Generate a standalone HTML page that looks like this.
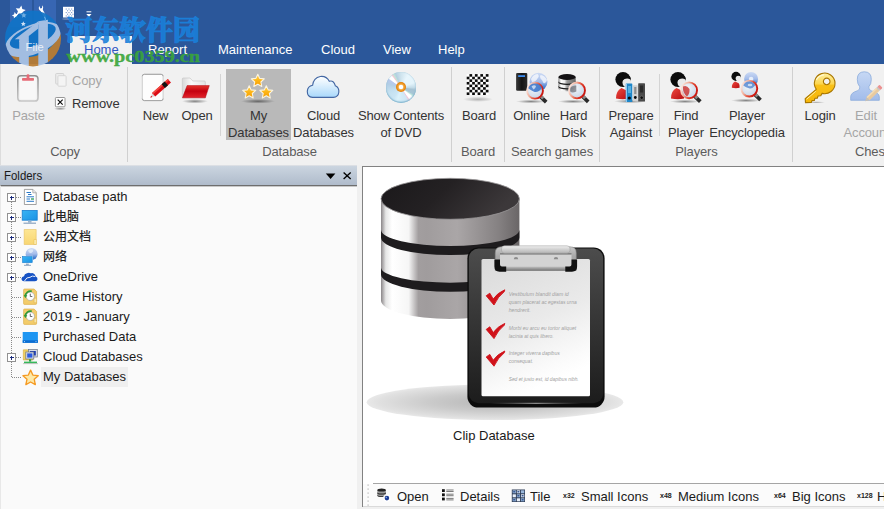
<!DOCTYPE html>
<html><head><meta charset="utf-8">
<style>
*{margin:0;padding:0;box-sizing:border-box}
html,body{width:884px;height:509px;overflow:hidden;background:#f0f0f0}
body{font-family:"Liberation Sans","Noto Sans CJK SC",sans-serif;font-size:13px;color:#1e1e1e;position:relative}
.abs{position:absolute}
svg{position:absolute;overflow:visible}
#title{left:0;top:0;width:884px;height:64px;background:#2b579a}
.qa{position:absolute;top:0;height:27px;width:22px;background:#3766b3}
.tab{position:absolute;top:42px;height:16px;line-height:16px;color:#fff;font-size:13px;white-space:nowrap}
#hometab{left:70px;top:36px;width:62px;height:28px;background:#f1f1f1}
#ribbon{left:0;top:64px;width:884px;height:101px;background:#f1f1f1;border-left:1px solid #dcdcdc}
.sep{position:absolute;width:1px;background:#d0d0d0;top:67px;height:95px}
.sep.s{top:74px;height:62px;background:#d4d4d4}
.lbl{position:absolute;font-size:13px;line-height:17px;text-align:center;white-space:nowrap;color:#343434;transform:translateX(-50%);top:107px;letter-spacing:-0.15px}
.lbl.dis{color:#a6a6a6}
.sl{position:absolute;font-size:13px;line-height:16px;white-space:nowrap;color:#343434;letter-spacing:-0.15px}
.glbl{position:absolute;font-size:13px;line-height:16px;text-align:center;white-space:nowrap;color:#5c5c5c;transform:translateX(-50%);top:144px;letter-spacing:-0.15px}
#hl{left:226px;top:69px;width:65px;height:71px;background:#b9b9b9}
#fhead{left:0;top:165px;width:357px;height:21px;background:linear-gradient(#cbd5e0,#aebaca);border-top:1px solid #dcdfe4}
#fhead span{position:absolute;left:4px;top:2px;line-height:16px;font-size:13px;transform:scaleX(0.88);transform-origin:0 0;color:#1a1a1a}
#tree{left:0;top:185px;width:357px;height:324px;background:#fafafa;border-top:1px solid #6e6e6e;box-shadow:inset 0 1px 0 #c8c8c8;border-left:1px solid #e8e8e8}
.ti{position:absolute;left:43px;font-size:13px;line-height:18px;white-space:nowrap;color:#1a1a1a}
#sel{left:41px;top:367px;width:87px;height:20px;background:#efefef}
#panel{left:362px;top:166px;width:530px;height:341px;background:#fff;border:1px solid #828282}
#tbar{left:363px;top:484px;width:521px;height:23px;background:#fbfbfb}
#tbline{left:373px;top:483px;width:511px;height:1px;background:#a5a5a5}
#tbbot{left:363px;top:506px;width:521px;height:1px;background:#dadada}
.tb{position:absolute;top:489px;font-size:13px;line-height:16px;white-space:nowrap;color:#1a1a1a}
.tx{position:absolute;top:491px;font-size:7px;line-height:9px;font-weight:bold;white-space:nowrap;color:#222}
#clip{position:absolute;left:453px;top:428px;font-size:13px;line-height:16px;white-space:nowrap;color:#1a1a1a}
#dvd{position:absolute;left:385.7px;top:72.3px;width:30.3px;height:30.3px;border-radius:50%;background:conic-gradient(from 0deg at 50% 50%,#cfe4ee 0deg,#e8f6fc 30deg,#e4f4fb 70deg,#c4dce8 90deg,#a6c2d2 100deg,#a8c6d6 118deg,#bfe6dc 124deg,#ffffff 130deg,#ffffff 142deg,#f0c8dc 147deg,#cfe6f4 153deg,#d4ecf8 180deg,#dcf2fb 195deg,#cbe6f4 215deg,#c4e0f0 250deg,#b2cee6 285deg,#b8c8ec 303deg,#ffffff 308deg,#ffffff 320deg,#f4c8d4 325deg,#bfe6d8 331deg,#b4d0e0 338deg,#cfe4ee 360deg);box-shadow:inset 0 -1.2px 1.5px #7eb2cc,inset 0 0 1px #9cc4d8}
#dvd i{position:absolute;left:10px;top:9.5px;width:10.3px;height:10.3px;border-radius:50%;background:radial-gradient(circle,#fff 0,#fff 1.9px,#f6b04a 2.6px,#e88a10 4.2px,#e07c08 5.1px)}
</style></head><body>
<div id="title" class="abs"></div>
<div class="qa" style="left:10px"></div><div class="qa" style="left:34px"></div>
<div id="hometab" class="abs"></div>
<div class="tab" style="left:84px;color:#3157c4">Home</div>
<div class="tab" style="left:148px">Report</div>
<div class="tab" style="left:218px">Maintenance</div>
<div class="tab" style="left:321px">Cloud</div>
<div class="tab" style="left:383px">View</div>
<div class="tab" style="left:438px">Help</div>
<div id="ribbon" class="abs"></div>
<div id="hl" class="abs"></div>
<div id="dvd"><i></i></div>
<div class="sep" style="left:127px"></div>
<div class="sep s" style="left:220px"></div>
<div class="sep" style="left:451px"></div>
<div class="sep" style="left:504px"></div>
<div class="sep" style="left:599px"></div>
<div class="sep s" style="left:659px"></div>
<div class="sep" style="left:792px"></div>

<div class="lbl dis" style="left:28.5px">Paste</div>
<div class="sl" style="left:72px;top:73px;color:#a6a6a6">Copy</div>
<div class="sl" style="left:72px;top:96px">Remove</div>
<div class="lbl" style="left:155.5px">New</div>
<div class="lbl" style="left:197px">Open</div>
<div class="lbl" style="left:258.5px">My<br>Databases</div>
<div class="lbl" style="left:323.5px">Cloud<br>Databases</div>
<div class="lbl" style="left:401px">Show Contents<br>of DVD</div>
<div class="lbl" style="left:479px">Board</div>
<div class="lbl" style="left:531.5px">Online</div>
<div class="lbl" style="left:573.5px">Hard<br>Disk</div>
<div class="lbl" style="left:631px">Prepare<br>Against</div>
<div class="lbl" style="left:686px">Find<br>Player</div>
<div class="lbl" style="left:747px">Player<br>Encyclopedia</div>
<div class="lbl" style="left:820px">Login</div>
<div class="lbl dis" style="left:866px">Edit<br><span style="position:relative;left:0.5px">Account</span></div>

<div class="glbl" style="left:65px">Copy</div>
<div class="glbl" style="left:289.5px">Database</div>
<div class="glbl" style="left:478px">Board</div>
<div class="glbl" style="left:552px">Search games</div>
<div class="glbl" style="left:696.5px">Players</div>
<div class="glbl" style="left:855px;transform:none">Chess</div>

<div id="fhead" class="abs"><span>Folders</span></div>
<div id="tree" class="abs"></div>
<div id="sel" class="abs"></div>
<div class="ti" style="top:188px">Database path</div>
<div class="ti" style="top:208px;font-size:12px;font-weight:500;color:#262626">此电脑</div>
<div class="ti" style="top:228px;font-size:12px;font-weight:500;color:#262626">公用文档</div>
<div class="ti" style="top:248px;font-size:12px;font-weight:500;color:#262626">网络</div>
<div class="ti" style="top:268px">OneDrive</div>
<div class="ti" style="top:288px">Game History</div>
<div class="ti" style="top:308px">2019 - January</div>
<div class="ti" style="top:328px">Purchased Data</div>
<div class="ti" style="top:348px">Cloud Databases</div>
<div class="ti" style="top:368px">My Databases</div>

<div id="panel" class="abs"></div>
<div id="tbar" class="abs"></div><div id="tbline" class="abs"></div><div id="tbbot" class="abs"></div>
<div id="clip">Clip Database</div>
<div class="tb" style="left:397px">Open</div>
<div class="tb" style="left:460px">Details</div>
<div class="tb" style="left:530px">Tile</div>
<div class="tx" style="left:563px">x32</div>
<div class="tb" style="left:581px">Small Icons</div>
<div class="tx" style="left:660px">x48</div>
<div class="tb" style="left:678px">Medium Icons</div>
<div class="tx" style="left:774px">x64</div>
<div class="tb" style="left:792px">Big Icons</div>
<div class="tx" style="left:857px">x128</div>
<div class="tb" style="left:877px">Huge Icons</div>
<!--ART-->
<svg id="art" width="884" height="509" viewBox="0 0 884 509" style="left:0;top:0;pointer-events:none">
<defs>
<radialGradient id="shd" cx="0.5" cy="0.5" r="0.5"><stop offset="0" stop-color="#b6b6b6"/><stop offset="0.5" stop-color="#cacaca"/><stop offset="0.9" stop-color="#e0e0e0"/><stop offset="1" stop-color="#e8e8e8"/></radialGradient>
<linearGradient id="cyl" x1="0" x2="1" y1="0" y2="0"><stop offset="0" stop-color="#8a8688"/><stop offset="0.035" stop-color="#e6e6e6"/><stop offset="0.08" stop-color="#ffffff"/><stop offset="0.2" stop-color="#f6f6f6"/><stop offset="0.27" stop-color="#a29e9f"/><stop offset="0.33" stop-color="#a09c9d"/><stop offset="0.55" stop-color="#aaa6a7"/><stop offset="0.85" stop-color="#858182"/><stop offset="1" stop-color="#6a6667"/></linearGradient>
<linearGradient id="top" x1="0" x2="1" y1="0" y2="0.3"><stop offset="0" stop-color="#1a181a"/><stop offset="0.5" stop-color="#242123"/><stop offset="1" stop-color="#3c383a"/></linearGradient>
<linearGradient id="brd" x1="0" x2="0" y1="0" y2="1"><stop offset="0" stop-color="#4c4c4c"/><stop offset="0.5" stop-color="#343434"/><stop offset="1" stop-color="#1c1c1c"/></linearGradient>
<linearGradient id="ppr" x1="0" x2="0.350" y1="0" y2="1"><stop offset="0" stop-color="#dadada"/><stop offset="0.55" stop-color="#eaeaea"/><stop offset="0.9" stop-color="#fbfbfb"/><stop offset="1" stop-color="#ffffff"/></linearGradient>
<linearGradient id="clp" x1="0" x2="0" y1="0" y2="1"><stop offset="0" stop-color="#c8c8c8"/><stop offset="0.4" stop-color="#a8a8a8"/><stop offset="1" stop-color="#989898"/></linearGradient>
<linearGradient id="lip" x1="490" x2="582" y1="0" y2="0" gradientUnits="userSpaceOnUse"><stop offset="0" stop-color="#666" stop-opacity="0"/><stop offset="0.5" stop-color="#8a8a8a"/><stop offset="1" stop-color="#666" stop-opacity="0"/></linearGradient>
<linearGradient id="clpbot" x1="0" x2="0" y1="0" y2="1"><stop offset="0" stop-color="#c0c0c0"/><stop offset="1" stop-color="#747474"/></linearGradient>
<linearGradient id="clpb" x1="0" x2="0" y1="0" y2="1"><stop offset="0" stop-color="#f0f0f0"/><stop offset="0.5" stop-color="#d0d0d0"/><stop offset="1" stop-color="#b4b4b4"/></linearGradient>
</defs>
<ellipse cx="495" cy="402.200" rx="128.300" ry="17.900" fill="url(#shd)"/>
<!-- disc 3 -->
<path d="M381 198.800 V300.500 A69.2 18.500 0 0 0 519.400 300.500 V198.800 Z" fill="url(#cyl)"/>
<path d="M381 229.800 A69.2 16.200 0 0 0 519.400 229.800 V237.600 A69.2 17.500 0 0 1 381 237.600 Z" fill="#1e1c1e"/>
<path d="M381 267.400 A69.2 15.300 0 0 0 519.400 267.400 V274.500 A69.2 17.200 0 0 1 381 274.500 Z" fill="#1e1c1e"/>
<ellipse cx="450.2" cy="198.800" rx="69.2" ry="20.500" fill="url(#top)" stroke="#9a9899" stroke-width="0.8"/>
<!-- clipboard -->
<rect x="467.400" y="247.400" width="137.200" height="160.200" rx="11" fill="#0c0c0c"/>
<rect x="468.800" y="248.600" width="134.400" height="154.600" rx="9.800" fill="url(#brd)"/>
<path d="M490 403.300 H582" stroke="url(#lip)" stroke-width="1.200" fill="none"/>
<rect x="481.500" y="259" width="108.500" height="137.300" rx="1.500" fill="url(#ppr)"/>

<path d="M495.300 270.500 V253 Q495.300 246.800 501.500 246.800 H570 Q576.200 246.800 576.200 253 V270.500 Z" fill="url(#clp)" stroke="#8e8e8e" stroke-width="0.600"/>
<rect x="500" y="253.800" width="71.500" height="13.200" fill="#d3d3d3"/>
<rect x="500" y="253.300" width="71.500" height="1.200" fill="#6c6c6c"/>
<rect x="501.500" y="245.800" width="68.500" height="7.400" rx="3" fill="url(#clpb)" stroke="#9a9a9a" stroke-width="0.500"/>
<rect x="505" y="266.600" width="61.500" height="4" fill="url(#clpbot)"/>
<path d="M513.800 259.300 A2.200 2.200 0 0 1 518.200 259.300 Z" fill="#8c8c8c"/><path d="M553.800 259.300 A2.200 2.200 0 0 1 558.200 259.300 Z" fill="#8c8c8c"/>
<path d="M494.400 259.500 H500 V264.500 Q500 266.500 502 266.500 H506.200 V271.700 H499.500 Q494.400 271.700 494.400 266.500 Z" fill="#101010"/>
<path d="M577.100 259.500 H571.500 V264.500 Q571.500 266.500 569.500 266.500 H565.300 V271.700 H572 Q577.100 271.700 577.100 266.500 Z" fill="#101010"/>
<g fill="#d0121a" stroke="#d0121a" stroke-width="0.900" stroke-linejoin="round">
<path id="ck" d="M486.200 295.800 L489.800 293.200 L493.200 299 Q497.500 292.800 504.800 289.800 L504.300 291.600 Q498 296.500 494 305 Z"/>
<use href="#ck" y="33.600"/><use href="#ck" y="61.200"/>
</g>
<g font-family="Liberation Sans, sans-serif" font-style="italic" font-size="5.400" fill="#a2a2a2">
<text x="508.700" y="295.800" textLength="60" lengthAdjust="spacingAndGlyphs">Vestibulum blandit diam id</text>
<text x="508.700" y="304" textLength="68" lengthAdjust="spacingAndGlyphs">quam placerat ac egestas urna</text>
<text x="508.700" y="312.200" textLength="22" lengthAdjust="spacingAndGlyphs">hendrerit.</text>
<text x="508.700" y="329.800" textLength="67.500" lengthAdjust="spacingAndGlyphs">Morbi eu arcu eu tortor aliquet</text>
<text x="508.700" y="338" textLength="45" lengthAdjust="spacingAndGlyphs">lacinia at quis libero.</text>
<text x="508.700" y="355.200" textLength="51" lengthAdjust="spacingAndGlyphs">Integer viverra dapibus</text>
<text x="508.700" y="363.400" textLength="24.500" lengthAdjust="spacingAndGlyphs">consequat.</text>
<text x="508.700" y="381" textLength="70" lengthAdjust="spacingAndGlyphs">Sed et justo est, id dapibus nibh.</text>
</g>
</svg>
<!--/ART-->
<!--IC1-->
<svg id="ic" width="884" height="509" viewBox="0 0 884 509" style="left:0;top:0;pointer-events:none">
<defs>
<radialGradient id="sh2" cx="0.5" cy="0.5" r="0.5"><stop offset="0" stop-color="#000" stop-opacity="0.45"/><stop offset="0.6" stop-color="#000" stop-opacity="0.18"/><stop offset="1" stop-color="#000" stop-opacity="0"/></radialGradient>
<linearGradient id="gold" x1="0" x2="0" y1="0" y2="1"><stop offset="0" stop-color="#ffd860"/><stop offset="0.5" stop-color="#fdb515"/><stop offset="1" stop-color="#f59a00"/></linearGradient>
<linearGradient id="cld" x1="0" x2="0" y1="0" y2="1"><stop offset="0" stop-color="#ffffff"/><stop offset="0.4" stop-color="#def0fd"/><stop offset="1" stop-color="#a8d8fb"/></linearGradient>
<linearGradient id="redf" x1="0" x2="0" y1="0" y2="1"><stop offset="0" stop-color="#e4352c"/><stop offset="0.45" stop-color="#c4000f"/><stop offset="1" stop-color="#e2222a"/></linearGradient>
<linearGradient id="fback" x1="0" x2="1" y1="0" y2="0"><stop offset="0" stop-color="#d8d8d8"/><stop offset="0.4" stop-color="#fafafa"/><stop offset="1" stop-color="#e4e4e4"/></linearGradient>
<linearGradient id="pst" x1="0" x2="0" y1="0" y2="1"><stop offset="0" stop-color="#8e8e8e"/><stop offset="1" stop-color="#c6c6c6"/></linearGradient>
<linearGradient id="ring" x1="0" x2="1" y1="0.3" y2="0.7"><stop offset="0" stop-color="#fbe6de"/><stop offset="0.3" stop-color="#f2b09c"/><stop offset="0.6" stop-color="#e04a34"/><stop offset="0.85" stop-color="#d41c14"/><stop offset="1" stop-color="#c41810"/></linearGradient>
<radialGradient id="lens" cx="0.4" cy="0.35" r="0.7"><stop offset="0" stop-color="#f4f8fc" stop-opacity="0.9"/><stop offset="1" stop-color="#b8cce4" stop-opacity="0.72"/></radialGradient>
<linearGradient id="body" x1="0" x2="1" y1="0" y2="1"><stop offset="0" stop-color="#ee4a40"/><stop offset="1" stop-color="#b80c10"/></linearGradient>
<linearGradient id="keyg" x1="0" x2="0" y1="0" y2="1"><stop offset="0" stop-color="#fff0a0"/><stop offset="0.36" stop-color="#fcd650"/><stop offset="0.42" stop-color="#f9c018"/><stop offset="1" stop-color="#f6b608"/></linearGradient>
<radialGradient id="dvd" cx="0.5" cy="0.5" r="0.5"><stop offset="0" stop-color="#e6f4fa"/><stop offset="0.8" stop-color="#c2e0ee"/><stop offset="1" stop-color="#9cc8dc"/></radialGradient>
<linearGradient id="cy2" x1="0" x2="1" y1="0" y2="0"><stop offset="0" stop-color="#888"/><stop offset="0.15" stop-color="#fff"/><stop offset="0.35" stop-color="#eee"/><stop offset="0.5" stop-color="#999"/><stop offset="1" stop-color="#666"/></linearGradient>
<g id="mag">
<path d="M5.200 5.600 L11.200 11.400" stroke="#2a2a2a" stroke-width="3.800" stroke-linecap="butt"/>
<path d="M5.600 5.200 L8.200 7.800" stroke="#8a8a8a" stroke-width="3"/>
<circle cx="0" cy="0" r="7.900" fill="url(#lens)"/>
<circle cx="0" cy="0" r="7.950" fill="none" stroke="url(#ring)" stroke-width="1.900"/>
</g>
<g id="person">
<path d="M-7 12.600 Q-7.200 5 -1.500 2 L4.500 5 Q6.800 8 6 12.600 Q0 13.800 -7 12.600 Z" fill="url(#body)"/>
<circle cx="0" cy="-6.500" r="7.600" fill="#0c0c0c"/>
<ellipse cx="3.800" cy="-3.400" rx="4.300" ry="4.900" fill="#e9e9e9"/>
<path d="M-0.500 -5.500 Q3 -9 8 -6.500 Q7 -12 0 -12 Z" fill="#0c0c0c"/>
</g>
<path id="star" d="M0.00 -6.50 L1.91 -2.33 L6.47 -1.80 L3.09 1.30 L4.00 5.80 L0.00 3.55 L-4.00 5.80 L-3.09 1.30 L-6.47 -1.80 L-1.91 -2.33 Z"/>
</defs>

<!-- Paste -->
<rect x="17.800" y="75.700" width="20.200" height="25.400" rx="3.200" fill="#f3f3f3" stroke="url(#pst)" stroke-width="1.500"/>
<rect x="20" y="78.500" width="15.800" height="20.500" rx="1" fill="#f8f8f8"/>
<rect x="22" y="78.100" width="12" height="2.700" rx="0.800" fill="#e66a76"/>
<rect x="26.600" y="74.200" width="2.800" height="4.500" rx="1.200" fill="#e66a76"/>
<!-- Copy -->
<rect x="55.700" y="73.500" width="8" height="10.500" rx="0.800" fill="#ececec" stroke="#cfcfcf" stroke-width="0.900"/>
<rect x="57.900" y="75.700" width="8.200" height="10.500" rx="0.800" fill="#f4f4f4" stroke="#d4d4d4" stroke-width="0.900"/>
<!-- Remove -->
<ellipse cx="60.200" cy="108.800" rx="6.500" ry="1.300" fill="url(#sh2)"/>
<rect x="55.400" y="97.500" width="9.600" height="9.300" rx="0.800" fill="#fff" stroke="#8c8c8c" stroke-width="0.900"/>
<path d="M57.700 99.700 L62.700 104.700 M62.700 99.700 L57.700 104.700" stroke="#111" stroke-width="1.200"/>
<!-- New -->
<rect x="142.300" y="74.300" width="20.800" height="26.300" rx="2" fill="#fdfdfd" stroke="#c4c4c4" stroke-width="0.800"/>
<path d="M142.300 76.300 Q142.300 74.300 144.300 74.300 H161.100 Q163.100 74.300 163.100 76.300" fill="none" stroke="#9e9e9e" stroke-width="0.900"/>
<path d="M142.300 98.600 Q142.300 100.600 144.300 100.600 H161.100 Q163.100 100.600 163.100 98.600" fill="none" stroke="#9e9e9e" stroke-width="0.900"/>
<g transform="translate(150.300 97.700) rotate(-41.500)">
<path d="M0 0 L4.500 -2 L4.500 2 Z" fill="#d8d8d8"/>
<path d="M0 0 L1.900 -0.850 L1.900 0.850 Z" fill="#d40a14"/>
<rect x="4.500" y="-2.400" width="21" height="4.800" fill="#dc0c16"/>
<rect x="4.500" y="-2.400" width="21" height="1.700" fill="#f04a42"/>
<rect x="17.300" y="-2.500" width="4.200" height="5" fill="#141414"/>
</g>
<!-- Open -->
<ellipse cx="195" cy="101.300" rx="13" ry="2.200" fill="url(#sh2)"/>
<path d="M182.300 97.800 V79 Q182.300 78 183.300 78 H190 L192.800 81 H204.300 Q205.300 81 205.300 82 V97.800 Z" fill="url(#fback)" stroke="#c2c2c2" stroke-width="0.600"/>
<path d="M187.100 85.600 H209.300 L205.300 97.800 H182.500 Z" fill="url(#redf)" stroke="#b00010" stroke-width="0.500"/>
<!-- My Databases stars -->
<ellipse cx="258" cy="101.300" rx="17" ry="2.300" fill="url(#sh2)"/>
<g fill="url(#gold)" stroke="#fbf4e0" stroke-width="1.100" stroke-linejoin="round">
<use href="#star" x="257.800" y="80.700"/><use href="#star" x="249.200" y="92.200"/><use href="#star" x="266.300" y="92.200"/>
</g>
<!-- Cloud -->
<path d="M312.500 97.400 Q307.200 97.200 307.300 91.300 Q307.600 86.300 312.600 85.300 Q313.500 77.800 320.300 76.500 Q326.500 75.800 329.300 81.300 Q333.800 79.900 335.300 85.700 Q339.300 87.300 338.800 92.300 Q338.300 97.200 333.300 97.400 Z" fill="url(#cld)" stroke="#4468a4" stroke-width="1.150"/>
<!-- DVD (html div) -->
<!-- Board -->
<ellipse cx="478" cy="99.300" rx="15" ry="2.600" fill="url(#sh2)" opacity="0.600"/>
<rect x="466.700" y="74.100" width="21.800" height="20.900" fill="#fff"/>
<g fill="#0a0a0a"><rect x="469.43" y="74.10" width="2.73" height="2.61"/><rect x="474.88" y="74.10" width="2.73" height="2.61"/><rect x="480.32" y="74.10" width="2.73" height="2.61"/><rect x="485.77" y="74.10" width="2.73" height="2.61"/><rect x="466.70" y="76.71" width="2.73" height="2.61"/><rect x="472.15" y="76.71" width="2.73" height="2.61"/><rect x="477.60" y="76.71" width="2.73" height="2.61"/><rect x="483.05" y="76.71" width="2.73" height="2.61"/><rect x="469.43" y="79.32" width="2.73" height="2.61"/><rect x="474.88" y="79.32" width="2.73" height="2.61"/><rect x="480.32" y="79.32" width="2.73" height="2.61"/><rect x="485.77" y="79.32" width="2.73" height="2.61"/><rect x="466.70" y="81.94" width="2.73" height="2.61"/><rect x="472.15" y="81.94" width="2.73" height="2.61"/><rect x="477.60" y="81.94" width="2.73" height="2.61"/><rect x="483.05" y="81.94" width="2.73" height="2.61"/><rect x="469.43" y="84.55" width="2.73" height="2.61"/><rect x="474.88" y="84.55" width="2.73" height="2.61"/><rect x="480.32" y="84.55" width="2.73" height="2.61"/><rect x="485.77" y="84.55" width="2.73" height="2.61"/><rect x="466.70" y="87.16" width="2.73" height="2.61"/><rect x="472.15" y="87.16" width="2.73" height="2.61"/><rect x="477.60" y="87.16" width="2.73" height="2.61"/><rect x="483.05" y="87.16" width="2.73" height="2.61"/><rect x="469.43" y="89.77" width="2.73" height="2.61"/><rect x="474.88" y="89.77" width="2.73" height="2.61"/><rect x="480.32" y="89.77" width="2.73" height="2.61"/><rect x="485.77" y="89.77" width="2.73" height="2.61"/><rect x="466.70" y="92.39" width="2.73" height="2.61"/><rect x="472.15" y="92.39" width="2.73" height="2.61"/><rect x="477.60" y="92.39" width="2.73" height="2.61"/><rect x="483.05" y="92.39" width="2.73" height="2.61"/></g>
</svg>
<!--/IC1-->
<!--IC2-->
<svg id="ic2" width="884" height="509" viewBox="0 0 884 509" style="left:0;top:0;pointer-events:none">
<defs>
<linearGradient id="glb" x1="0" x2="0" y1="0" y2="1"><stop offset="0" stop-color="#ccdaf4"/><stop offset="0.5" stop-color="#a4bcea"/><stop offset="0.8" stop-color="#4a80d0"/><stop offset="1" stop-color="#2e6cc4"/></linearGradient>
<linearGradient id="srv" x1="0" x2="1" y1="0" y2="0"><stop offset="0" stop-color="#3a3a3a"/><stop offset="0.5" stop-color="#141414"/><stop offset="1" stop-color="#2a2a2a"/></linearGradient>
<linearGradient id="pblue" x1="0" x2="0" y1="0" y2="1"><stop offset="0" stop-color="#c6d8f4"/><stop offset="1" stop-color="#a2bcea"/></linearGradient>
</defs>
<!-- Online -->
<ellipse cx="531" cy="101.500" rx="15" ry="1.800" fill="url(#sh2)"/>
<rect x="516.100" y="72.900" width="11.200" height="17.800" rx="1.200" fill="url(#srv)"/>
<rect x="518.200" y="75.200" width="6.800" height="1.800" fill="#3c8cf0"/>
<circle cx="538.500" cy="81.800" r="9" fill="url(#glb)"/>
<path d="M531 79 Q533 74.500 537.500 74 Q540 76 537.500 78.500 Q535.500 82 532 82 Z M540.500 75 Q545 75.500 547 80 Q546 84 543.500 83 Q542.500 80 540.500 78.500 Q539.500 76.500 540.500 75 Z" fill="#fff" opacity="0.700"/>
<use href="#mag" x="535" y="90.700"/>
<path d="M528.300 88.300 Q529.500 83.800 535 83.600 Q540.500 83.800 541.800 88 Q538 93.500 533.500 91.500 Q530.500 90 528.300 88.300 Z" fill="#2f6ec8" opacity="0.800"/>
<path d="M531.500 86.500 Q534 84.300 536 86 Q535.500 89 533.500 89.500 Z" fill="#dfe9f8" opacity="0.800"/>
<!-- Hard Disk -->
<ellipse cx="573" cy="101.500" rx="15" ry="1.800" fill="url(#sh2)"/>
<path d="M558.400 77 V88.500 A8.650 2.800 0 0 0 575.700 88.500 V77 Z" fill="url(#cy2)"/>
<path d="M558.400 81.200 A8.650 2.600 0 0 0 575.700 81.200 V82.500 A8.650 2.600 0 0 1 558.400 82.500 Z" fill="#1a1a1a"/>
<path d="M558.400 85.700 A8.650 2.600 0 0 0 575.700 85.700 V87 A8.650 2.600 0 0 1 558.400 87 Z" fill="#1a1a1a"/>
<ellipse cx="567.050" cy="77" rx="8.650" ry="3" fill="#141214"/>
<use href="#mag" x="577" y="90.400"/>
<path d="M570.800 87 Q573 85 576.300 85.500 V91.500 Q573 93 570.500 92 Q569.800 89.500 570.800 87 Z" fill="#4a4a52" opacity="0.550"/>
<!-- Prepare Against -->
<ellipse cx="630" cy="101.300" rx="16" ry="2" fill="url(#sh2)"/>
<use href="#person" x="623" y="86"/>
<rect x="625.800" y="83.500" width="6.500" height="18.500" rx="0.600" fill="#1f86c8"/>
<rect x="625.800" y="83.500" width="1.200" height="18.500" fill="#8cc8f0"/>
<rect x="628" y="86" width="3" height="7" fill="#58b0e0"/>
<circle cx="629.300" cy="98" r="1.600" fill="#0a0a0a"/>
<rect x="632.900" y="85.200" width="4.800" height="16" rx="0.500" fill="#d2d2d2"/>
<rect x="634.200" y="87" width="2.200" height="7" fill="#8e8e8e"/>
<circle cx="635.300" cy="97.500" r="1.400" fill="#0a0a0a"/>
<rect x="638.200" y="83.200" width="6.800" height="18.400" rx="0.600" fill="#4a4a4a"/>
<rect x="640" y="85.500" width="3.200" height="7" fill="#2a2a2a"/>
<circle cx="641.700" cy="97.700" r="1.700" fill="#0a0a0a" stroke="#888" stroke-width="0.500"/>
<!-- Find Player -->
<ellipse cx="685" cy="101.500" rx="15" ry="1.800" fill="url(#sh2)"/>
<use href="#person" x="678" y="86"/>
<use href="#mag" x="689.100" y="90.300"/>
<path d="M683 86.500 Q686.500 84.500 689.500 89 Q690 94 687 96.500 Q682.500 93 683 86.500 Z" fill="#c8201c" opacity="0.750"/>
<!-- Player Encyclopedia -->
<ellipse cx="746" cy="100.500" rx="15" ry="1.800" fill="url(#sh2)"/>
<circle cx="751.100" cy="79" r="7" fill="url(#glb)"/>
<circle cx="751.100" cy="79" r="2.300" fill="#e6eefa"/>
<g transform="translate(736 80.300) scale(0.600)"><use href="#person"/></g>
<use href="#mag" x="749.300" y="88.600"/>
<path d="M743.300 85.500 Q745 81.800 749.300 81.600 Q753.500 81.800 755.300 85.300 Q752 89.500 749 88.300 Q746 87.500 743.300 85.500 Z" fill="#3f78cc" opacity="0.700"/>
<ellipse cx="750" cy="85" rx="2.300" ry="1.300" fill="#e4ecf8" opacity="0.800"/>
<!-- Login key -->
<ellipse cx="816" cy="102.300" rx="9" ry="1.100" fill="url(#sh2)" opacity="0.700"/>
<path d="M816.260 89.300 L805.200 98.600 L805.500 102.600 L811.300 102.500 L811.900 100.600 L814.300 100.500 L814.900 98.300 L817.400 98.200 L818 96 L820.800 95.800 L822.030 93.350 A10.300 10.300 0 1 0 816.260 89.300 Z M830 81.400 A3.300 3.300 0 1 1 823.400 81.400 A3.300 3.300 0 1 1 830 81.400 Z" fill="url(#keyg)" stroke="#a87600" stroke-width="1.100" stroke-linejoin="round" fill-rule="evenodd"/>
<path d="M815.800 91.300 L806.600 99.200" stroke="#fff2b0" stroke-width="1" opacity="0.900"/>
<path d="M816.300 80 Q818.300 75.300 824 74.800" stroke="#fffbe0" stroke-width="1.300" fill="none" opacity="0.800"/>
<!-- Edit Account -->
<path d="M864.300 71.800 Q871.300 71.800 871.300 79.300 Q871.300 84.300 868.800 86.800 Q868.300 89.800 871.300 90.800 Q879.300 92.800 879.300 96.800 V100.300 H850.700 V96.800 Q850.700 92.800 857.300 90.800 Q860.300 89.800 859.800 86.800 Q857.300 84.300 857.300 79.300 Q857.300 71.800 864.300 71.800 Z" fill="url(#pblue)" stroke="#8cacdc" stroke-width="0.800"/>
<g transform="translate(865.200 101.300) rotate(-43.500)">
<path d="M0 0 L4 -2.200 L4 2.200 Z" fill="#c8c0b4"/>
<rect x="4" y="-2.200" width="13.500" height="4.400" fill="#e8caa0"/>
<rect x="4" y="-2.200" width="13.500" height="1.500" fill="#f2dcb8"/>
<rect x="17.500" y="-2.200" width="1.300" height="4.400" fill="#c0c0c0"/>
<rect x="18.800" y="-2.200" width="3" height="4.400" rx="0.800" fill="#ec9090"/>
</g>
</svg>
<!--/IC2-->
<!--IC3-->
<svg id="ic3" width="884" height="509" viewBox="0 0 884 509" style="left:0;top:0;pointer-events:none">
<defs>
<clipPath id="lgc"><circle cx="33" cy="38.500" r="28"/></clipPath>
<clipPath id="wmc"><rect x="0" y="0" width="884" height="64"/></clipPath>
<linearGradient id="fold" x1="0" x2="0" y1="0" y2="1"><stop offset="0" stop-color="#fde693"/><stop offset="1" stop-color="#f8d672"/></linearGradient>
<linearGradient id="mon" x1="0" x2="1" y1="0" y2="1"><stop offset="0" stop-color="#38b4f4"/><stop offset="1" stop-color="#1a92e4"/></linearGradient>
<g id="plus"><rect x="0.500" y="0.500" width="8" height="8" fill="#fff" stroke="#919191" stroke-width="1"/><path d="M2.500 4.500 H6.500 M4.500 2.500 V6.500" stroke="#1a2a7a" stroke-width="1" shape-rendering="crispEdges"/></g>
<g id="hist">
<path d="M0.300 1.200 Q0.300 0.300 1.200 0.300 H10.800 L13.300 2.800 V14.800 Q13.300 15.700 12.400 15.700 H1.200 Q0.300 15.700 0.300 14.800 Z" fill="#f3cc6a" stroke="#d8a83c" stroke-width="0.600"/>
<path d="M10.800 9.500 H13.300 V14 H10.800 Z" fill="#fae6a8" stroke="#d8a83c" stroke-width="0.400"/>
<circle cx="7" cy="7.600" r="4.200" fill="#fdfdfd" stroke="#9a9a9a" stroke-width="0.600"/>
<path d="M7 5 V7.800 H9" stroke="#444" stroke-width="0.800" fill="none"/>
<path d="M2 7.500 A5.200 5.200 0 0 1 8.500 2.600" stroke="#2f9a3a" stroke-width="1.600" fill="none"/>
<path d="M0.400 6.300 L4 6.600 L2 9.600 Z" fill="#2f9a3a"/>
</g>
</defs>

<!-- quick access icons -->
<g fill="#fff">
<use href="#star" transform="translate(20.500 10.600) scale(0.780) rotate(10)"/>
<use href="#star" transform="translate(15.300 15.400) scale(0.520) rotate(-12)"/>
<path d="M39.300 6 Q37.800 9.300 40.600 11 L44 17 Q45 18 46 17 Q46.600 16 45.800 15.200 L42.800 9.800 Q44.300 7.500 42.300 5.300 L42 8 L40.400 8.500 Z"/>
<rect x="63" y="6.800" width="11" height="10.700"/>
</g>
<g fill="#7f9cd0">
<rect x="65.700" y="8.500" width="1.100" height="1.100"/><rect x="68.400" y="8.500" width="1.100" height="1.100"/><rect x="71.100" y="8.500" width="1.100" height="1.100"/>
<rect x="67" y="10.200" width="1.100" height="1.100"/><rect x="69.800" y="10.200" width="1.100" height="1.100"/><rect x="72.400" y="10.200" width="1.100" height="1.100"/>
<rect x="65.700" y="12" width="1.100" height="1.100"/><rect x="68.400" y="12" width="1.100" height="1.100"/><rect x="71.100" y="12" width="1.100" height="1.100"/>
<rect x="67" y="13.700" width="1.100" height="1.100"/><rect x="69.800" y="13.700" width="1.100" height="1.100"/><rect x="72.400" y="13.700" width="1.100" height="1.100"/>
<rect x="65.700" y="15.400" width="1.100" height="1.100"/><rect x="68.400" y="15.400" width="1.100" height="1.100"/><rect x="71.100" y="15.400" width="1.100" height="1.100"/>
</g>
<ellipse cx="67" cy="19" rx="5" ry="0.800" fill="#fff" opacity="0.350"/>
<rect x="86.500" y="11.300" width="4.800" height="1" fill="#fff"/>
<path d="M86.300 14 H91.500 L88.900 17 Z" fill="#fff"/>

<!-- watermark logo -->
<g clip-path="url(#lgc)" opacity="0.940">
<rect x="4" y="9" width="60" height="60" fill="#1273c6"/>
<path d="M4 50 Q20 60 36 56 Q54 50 62 30 V68 H4 Z" fill="#b97d34"/>
<ellipse cx="33" cy="39.500" rx="29.800" ry="14.600" transform="rotate(-22 33 39.500)" fill="#abc4e6"/>
<ellipse cx="32.800" cy="36.200" rx="24.300" ry="9.700" transform="rotate(-21 32.800 36.200)" fill="#1273c6"/>
<path d="M19.200 41 H28.800 V68 H19.200 Z" fill="#abc4e6"/>
<path d="M38.300 21.300 L47.900 19.800 V68 H38.300 Z" fill="#abc4e6"/>
<path d="M14.800 39.200 L38.300 21.300 V28.500 L28.800 36 V42 H19.200 V39.200 Z" fill="#abc4e6"/>
</g>
<g fill="#79b4e6" opacity="0.900">
<use href="#star" transform="translate(23.800 15.300) scale(0.430)"/>
</g>
<use href="#star" transform="translate(23.300 23.800) scale(0.380)" fill="#cfe0f4"/>
<path d="M44.300 16.800 Q46.300 18.800 45 20.800" stroke="#5fa8e4" stroke-width="1.200" fill="none"/>
<g clip-path="url(#wmc)">
<text x="65.300" y="40" font-family="'Noto Serif CJK SC','Noto Sans CJK SC',serif" font-weight="900" font-size="27.200" fill="#1a80da" fill-opacity="0.900" stroke="#1a80da" stroke-opacity="0.900" stroke-width="0.900" textLength="134.500" lengthAdjust="spacingAndGlyphs">河东软件园</text>
</g>
<g>
<text x="66.300" y="62.400" font-family="'Liberation Serif',serif" font-weight="bold" font-size="16.300" fill="#3aa53a" fill-opacity="0.920" stroke="#3aa53a" stroke-width="0.300" textLength="133.800" lengthAdjust="spacingAndGlyphs">www.pc0359.cn</text>
</g>
<text x="25.600" y="51.100" font-family="'Liberation Sans',sans-serif" font-size="11.200" fill="#fff" fill-opacity="0.780">File</text>

<!-- folders header buttons -->
<path d="M325.800 173.600 H335.400 L330.600 179 Z" fill="#000"/>
<path d="M343.600 172.600 L350.700 179 M350.700 172.600 L343.600 179" stroke="#000" stroke-width="1.350"/>

<!-- tree lines -->
<g stroke="#8a8a8a" stroke-width="1" stroke-dasharray="1 1" shape-rendering="crispEdges">
<path d="M11.500 202 V377.500"/>
<path d="M16 197.500 H22"/><path d="M16 217.500 H22"/><path d="M16 237.500 H22"/><path d="M16 257.500 H22"/><path d="M16 277.500 H22"/>
<path d="M12 297.500 H22"/><path d="M12 317.500 H22"/><path d="M12 337.500 H22"/><path d="M16 357.500 H22"/><path d="M12 377.500 H22"/>
</g>
<use href="#plus" x="7" y="193"/><use href="#plus" x="7" y="213"/><use href="#plus" x="7" y="233"/><use href="#plus" x="7" y="253"/><use href="#plus" x="7" y="273"/><use href="#plus" x="7" y="353"/>

<!-- tree icons -->
<!-- doc -->
<path d="M24.400 189.400 H32.800 L36.200 192.800 V204.500 H24.400 Z" fill="#fff" stroke="#8a8a8a" stroke-width="0.800"/>
<path d="M32.800 189.400 V192.800 H36.200" fill="#e8e8e8" stroke="#8a8a8a" stroke-width="0.600"/>
<g stroke="#2878c8" stroke-width="1"><path d="M26.500 192.500 H31"/><path d="M28 194.500 H31.500"/><path d="M26.500 196.800 H34"/><path d="M26.500 199 H30"/><path d="M26.500 201.300 H34"/></g>
<path d="M31 199 H34" stroke="#3aa060" stroke-width="1.400"/>
<!-- monitor -->
<rect x="22.200" y="210.400" width="15" height="9.800" fill="url(#mon)" stroke="#1a7fd0" stroke-width="0.800"/>
<rect x="28" y="220.600" width="3.500" height="2" fill="#9ab4cc"/>
<rect x="23.500" y="222.600" width="12.500" height="1.200" fill="#8aa4c0"/>
<!-- folder -->
<path d="M24.200 229.500 H36.200 V244.500 H24.200 Z" fill="url(#fold)" stroke="#e4b84c" stroke-width="0.500"/>
<path d="M34 239.500 H36.300 V244.500 H34 Z" fill="#fdeeb4" stroke="#e0b040" stroke-width="0.400"/>
<!-- network -->
<circle cx="31.600" cy="254" r="6" fill="url(#glb)"/>
<path d="M28 250.500 Q30.500 248.500 33 249.500 Q33.500 252 31 253 Q29 253.500 28 250.500 Z" fill="#dfeaf8" opacity="0.900"/>
<rect x="21.800" y="255.800" width="11.200" height="7.600" fill="#e8f4fc"/><rect x="22.600" y="256.600" width="9.600" height="6" fill="url(#mon)" stroke="#1a7fd0" stroke-width="0.600"/>
<rect x="26" y="263.600" width="2.800" height="1.300" fill="#8aa4c0"/><rect x="24" y="264.800" width="7" height="1" fill="#8aa4c0"/>
<!-- onedrive -->
<path d="M24.200 281.300 Q21.300 281 21.500 278.500 Q21.800 276.500 24 276.300 Q24.300 273.800 27 273.300 Q28.800 272.300 31 273.300 Q33 272.300 34.800 274.500 Q35.500 275.500 35.500 276.500 Q37.800 277 37.500 279.300 Q37.200 281.200 35 281.300 Z" fill="#1652c4"/>
<path d="M24.500 281 Q26.500 276.800 30 277.300 Q32 275.300 35 276.500" stroke="#fff" stroke-width="0.900" fill="none"/>
<!-- history x2 -->
<use href="#hist" x="23.300" y="288.700"/><use href="#hist" x="23.300" y="308.700"/>
<!-- purchased -->
<rect x="22.700" y="332" width="15.200" height="10.800" fill="#1e96f2"/>
<rect x="22.700" y="340.300" width="15.200" height="2.500" fill="#0c6cd0"/>
<rect x="24" y="341.200" width="1" height="0.900" fill="#bfe0ff"/><rect x="35.500" y="341.200" width="1" height="0.900" fill="#bfe0ff"/>
<!-- cloud databases -->
<path d="M23.300 349.800 H27.500 L28.800 351 H33 V360 H23.300 Z" fill="#f0d060" stroke="#c8a030" stroke-width="0.500"/>
<rect x="28.500" y="349.600" width="8.800" height="7.400" fill="#d8dce4" stroke="#6a7484" stroke-width="0.700"/>
<rect x="30" y="351" width="5.800" height="4.500" fill="#1838b0"/>
<rect x="25.800" y="352" width="8" height="7" fill="#d8dce4" stroke="#6a7484" stroke-width="0.700"/>
<rect x="27.200" y="353.400" width="5.200" height="4.200" fill="#2a5ae0"/>
<rect x="29" y="359.300" width="2.200" height="2.300" fill="#2aa048"/>
<rect x="24" y="361.600" width="13" height="1.700" fill="#38b85a"/>
<rect x="23" y="363.300" width="15" height="0.800" fill="#b8b8b8"/>
<!-- star -->
<use href="#star" transform="translate(30.600 377.800) scale(1.180)" fill="#fde9a8" stroke="#f59a23" stroke-width="1.150" stroke-linejoin="round"/>

<!-- toolbar gripper -->
<g fill="#b4b4b4"><rect x="367.500" y="484.500" width="1.200" height="1.200"/><rect x="367.500" y="488.500" width="1.200" height="1.200"/><rect x="367.500" y="492.500" width="1.200" height="1.200"/><rect x="367.500" y="496.500" width="1.200" height="1.200"/><rect x="367.500" y="500.500" width="1.200" height="1.200"/><rect x="367.500" y="504.500" width="1.200" height="1.200"/></g>
<!-- toolbar open icon -->
<path d="M377.300 490 V495.500 A4.300 1.500 0 0 0 385.900 495.500 V490 Z" fill="#9a9a9a"/>
<ellipse cx="381.600" cy="490" rx="4.300" ry="1.600" fill="#222"/>
<path d="M377.300 492 A4.300 1.500 0 0 0 385.900 492 V493 A4.300 1.500 0 0 1 377.300 493 Z" fill="#222"/>
<path d="M377.300 494.500 A4.300 1.500 0 0 0 385.900 494.500 V495.300 A4.300 1.500 0 0 1 377.300 495.300 Z" fill="#222"/>
<circle cx="386.900" cy="498.100" r="3.800" fill="#fff" opacity="0.900"/>
<circle cx="386.900" cy="498.100" r="2.300" fill="#1c3c94"/>
<circle cx="386.300" cy="497.500" r="0.800" fill="#7aa4ec"/>
<!-- details icon -->
<g fill="#111"><rect x="442" y="489.200" width="2.800" height="2.800"/><rect x="442" y="493.400" width="2.800" height="2.800"/><rect x="442" y="497.600" width="2.800" height="2.800"/></g>
<g stroke="#444" stroke-width="0.700" fill="none">
<path d="M446.300 490 H453.600 M446.300 491.500 H453.600"/><path d="M446.300 494.200 H453.600 M446.300 495.700 H453.600"/><path d="M446.300 498.400 H453.600 M446.300 499.900 H453.600"/></g>
<!-- tile icon -->
<rect x="511.800" y="489.500" width="13.200" height="12.500" fill="#2c3a54"/>
<g fill="#9ab8dc"><rect x="512.600" y="490.300" width="3.300" height="3"/><rect x="521" y="490.300" width="3.300" height="3"/>
<rect x="516.800" y="494.300" width="3.300" height="3"/><rect x="512.600" y="498.300" width="3.300" height="3"/><rect x="521" y="498.300" width="3.300" height="3"/></g>
<g fill="#e8f0fa"><rect x="516.800" y="490.300" width="3.300" height="3"/><rect x="512.600" y="494.300" width="3.300" height="3"/><rect x="521" y="494.300" width="3.300" height="3"/><rect x="516.800" y="498.300" width="3.300" height="3"/></g>
<g fill="#3a5a94"><rect x="513.200" y="491" width="2" height="1.500"/><rect x="517.400" y="495" width="2" height="1.500"/><rect x="521.600" y="499" width="2" height="1.500"/><rect x="517.400" y="491" width="2" height="1.500"/><rect x="521.600" y="495" width="2" height="1.500"/><rect x="513.200" y="499" width="2" height="1.500"/></g>
</svg>
<!--/IC3-->
<!--ICONS-->
</body></html>
